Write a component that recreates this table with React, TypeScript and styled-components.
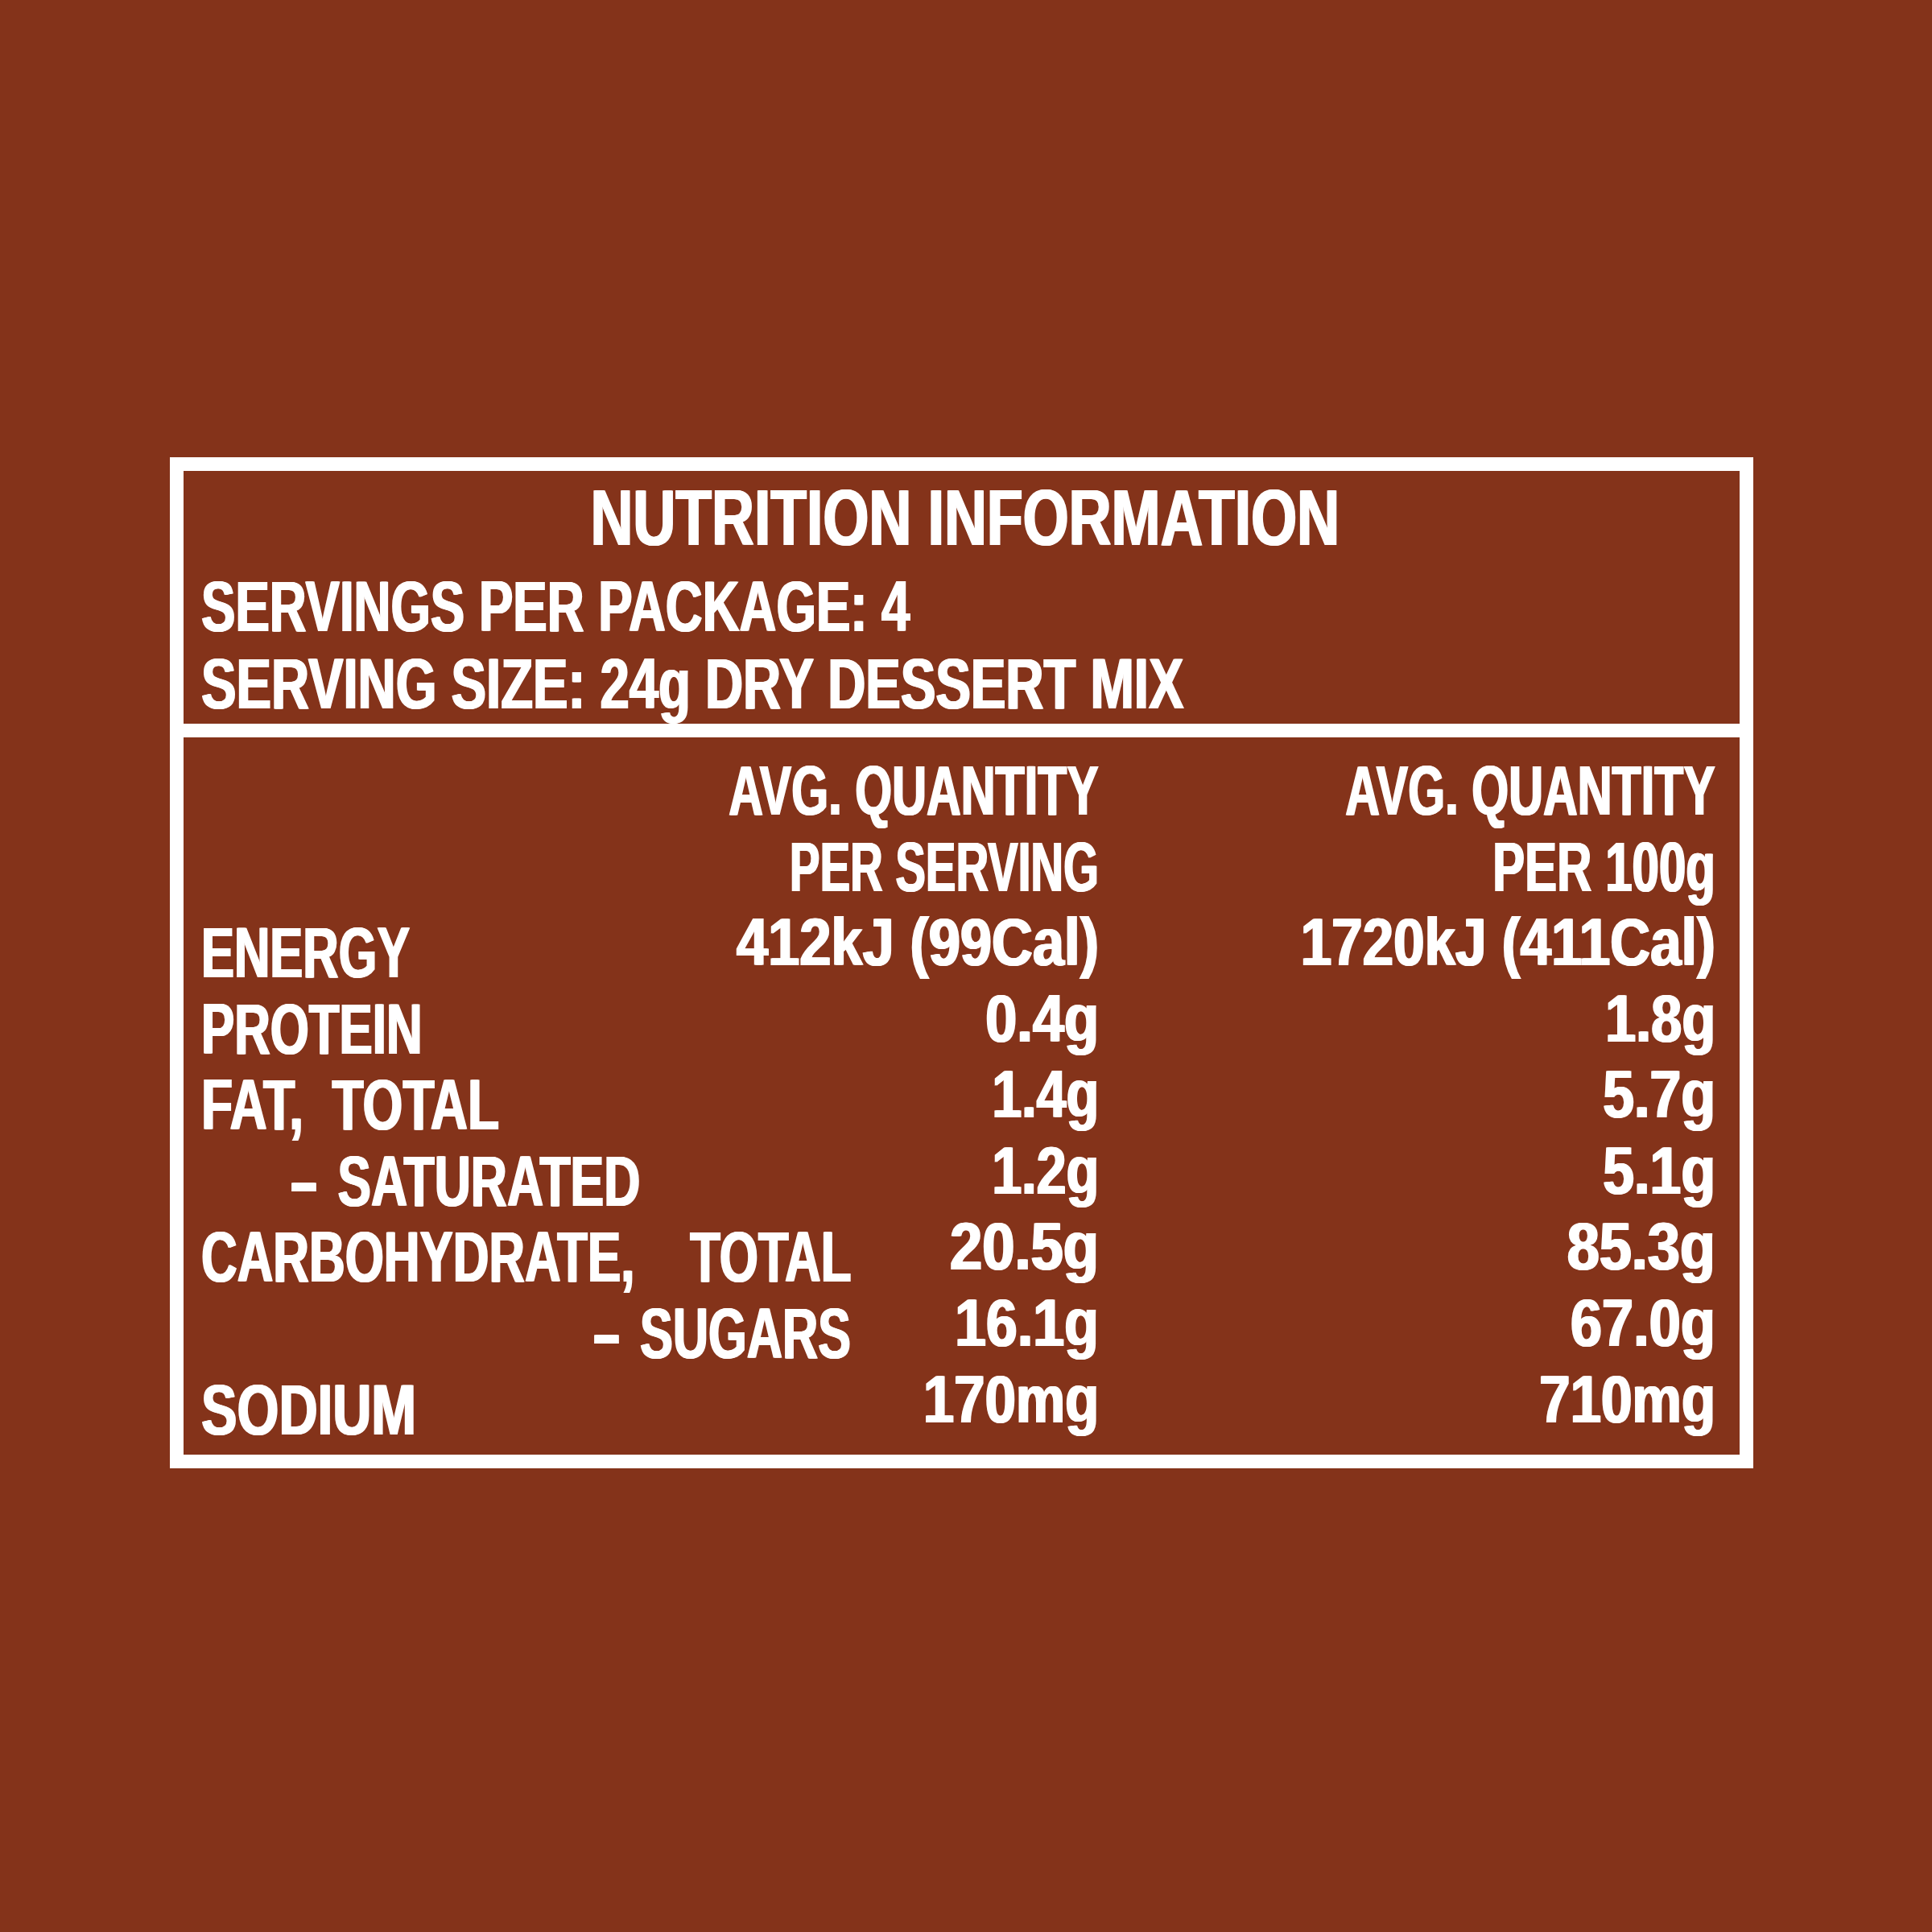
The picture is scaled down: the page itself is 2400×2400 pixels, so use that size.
import React from "react";
import styled, { createGlobalStyle } from "styled-components";

const BROWN = "#84331a";

const Global = createGlobalStyle`
  html, body { margin: 0; padding: 0; background: ${BROWN}; }
  body { width: 2400px; height: 2400px; overflow: hidden; }
`;

const Page = styled.div`
  width: 2400px;
  height: 2400px;
  box-sizing: border-box;
  padding: 568px 0 0 211px;
  background: ${BROWN};
  font-family: "Liberation Sans", Arial, sans-serif;
  font-weight: 700;
  color: #ffffff;
`;

const Frame = styled.section`
  width: 1967px;
  box-sizing: border-box;
  padding: 17px;
  background: #ffffff;
  display: flex;
  flex-direction: column;
  gap: 17px;
`;

const HeaderPanel = styled.header`
  height: 314px;
  box-sizing: border-box;
  background: ${BROWN};
  padding: 8px 13px 0 22px;
`;

const Title = styled.h1`
  margin: 0;
  font-size: 99px;
  line-height: 100px;
  font-weight: 700;
  text-align: center;
  white-space: nowrap;
`;

const InfoLines = styled.div`
  margin-top: 12px;
  font-size: 89px;
  line-height: 96px;
`;

const InfoLine = styled.p`
  margin: 0;
  white-space: nowrap;
`;

/* condensed type: the label face is a narrow display sans, so each run is
   squeezed horizontally and its stems are thickened slightly with side shadows */
const Squeeze = styled.span<{ $x: number; $origin?: string }>`
  display: inline-block;
  white-space: pre;
  transform: scaleX(${(p) => p.$x});
  transform-origin: ${(p) => p.$origin ?? "left"} center;
  text-shadow: 1.4px 0 0 #ffffff, -1.4px 0 0 #ffffff;
`;

const Dash = styled.span`
  display: inline-block;
  margin-right: 13px;
  transform: scaleX(1.25);
  transform-origin: left center;
  text-shadow: 1px 0 0 #ffffff, -1px 0 0 #ffffff;
`;

const TablePanel = styled.div`
  height: 891px;
  box-sizing: border-box;
  background: ${BROWN};
  padding: 18px 30px 0 22px;
`;

const Columns = styled.div`
  display: grid;
  grid-template-columns: minmax(0, 1fr) 600px 766px;
  align-items: start;
`;

const HeadRow = styled(Columns)`
  margin-bottom: 12px;
`;

const HeadCell = styled.div<{ $col: number }>`
  grid-column: ${(p) => p.$col};
  display: flex;
  flex-direction: column;
  align-items: flex-end;
  font-size: 88px;
  line-height: 95px;
`;

const Label = styled.div<{ $indent: number }>`
  padding-left: ${(p) => p.$indent}px;
  font-size: 89px;
  line-height: 94.6px;
  white-space: nowrap;
`;

const Value = styled.div`
  display: flex;
  justify-content: flex-end;
  font-size: 84px;
  line-height: 68.4px;
  white-space: nowrap;
`;

const DataRow = styled(Columns)`
  height: 94.6px;
`;

type Row = {
  label: string;
  lx: number;
  dash?: boolean;
  indent?: number;
  v1: string;
  s1: number;
  v2: string;
  s2: number;
};

const rows: Row[] = [
  { label: "ENERGY", lx: 0.69, v1: "412kJ (99Cal)", s1: 0.838, v2: "1720kJ (411Cal)", s2: 0.823 },
  { label: "PROTEIN", lx: 0.694, v1: "0.4g", s1: 0.839, v2: "1.8g", s2: 0.815 },
  { label: "FAT,  TOTAL", lx: 0.72, v1: "1.4g", s1: 0.79, v2: "5.7g", s2: 0.833 },
  { label: " SATURATED", lx: 0.702, dash: true, indent: 109, v1: "1.2g", s1: 0.79, v2: "5.1g", s2: 0.833 },
  { label: "CARBOHYDRATE,    TOTAL", lx: 0.695, v1: "20.5g", s1: 0.86, v2: "85.3g", s2: 0.857 },
  { label: " SUGARS", lx: 0.688, dash: true, indent: 485, v1: "16.1g", s1: 0.832, v2: "67.0g", s2: 0.838 },
  { label: "SODIUM", lx: 0.75, v1: "170mg", s1: 0.82, v2: "710mg", s2: 0.823 },
];

export default function App() {
  return (
    <Page>
      <Global />
      <Frame>
        <HeaderPanel>
          <Title>
            <Squeeze $x={0.74} $origin="center">NUTRITION INFORMATION</Squeeze>
          </Title>
          <InfoLines>
            <InfoLine>
              <Squeeze $x={0.714}>SERVINGS PER PACKAGE: 4</Squeeze>
            </InfoLine>
            <InfoLine>
              <Squeeze $x={0.733}>SERVING SIZE: 24g DRY DESSERT MIX</Squeeze>
            </InfoLine>
          </InfoLines>
        </HeaderPanel>
        <TablePanel>
          <HeadRow>
            <HeadCell $col={2}>
              <Squeeze $x={0.673} $origin="right">AVG. QUANTITY</Squeeze>
              <Squeeze $x={0.64} $origin="right">PER SERVING</Squeeze>
            </HeadCell>
            <HeadCell $col={3}>
              <Squeeze $x={0.673} $origin="right">AVG. QUANTITY</Squeeze>
              <Squeeze $x={0.682} $origin="right">PER 100g</Squeeze>
            </HeadCell>
          </HeadRow>
          {rows.map((r) => (
            <DataRow key={r.label}>
              <Label $indent={r.indent ?? 0}>
                {r.dash && <Dash>-</Dash>}
                <Squeeze $x={r.lx}>{r.label}</Squeeze>
              </Label>
              <Value>
                <Squeeze $x={r.s1} $origin="right">{r.v1}</Squeeze>
              </Value>
              <Value>
                <Squeeze $x={r.s2} $origin="right">{r.v2}</Squeeze>
              </Value>
            </DataRow>
          ))}
        </TablePanel>
      </Frame>
    </Page>
  );
}
